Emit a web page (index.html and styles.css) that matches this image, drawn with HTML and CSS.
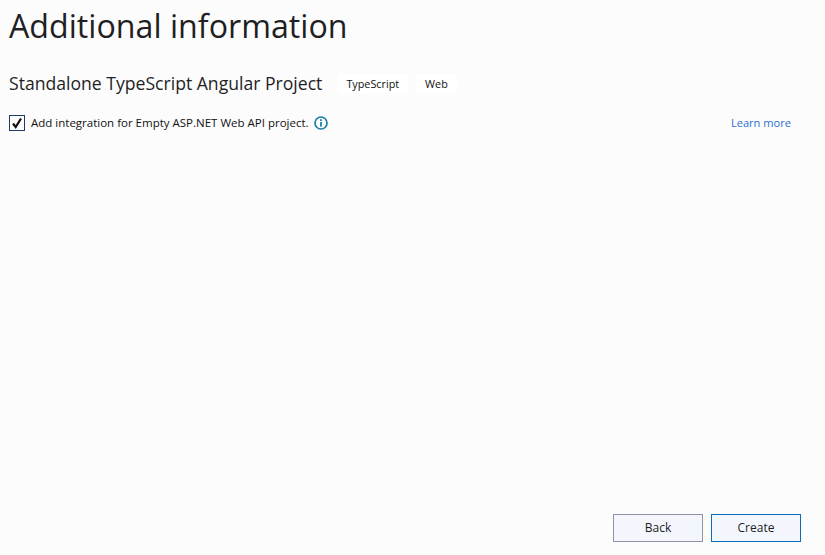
FILE: index.html
```html
<!DOCTYPE html>
<html lang="en">
<head>
<meta charset="utf-8">
<title>Additional information</title>
<link rel="stylesheet" href="styles.css">
</head>
<body>
<main class="page">
  <h1 class="title">Additional information</h1>
  <div class="subtitle-row">
    <h2 class="subtitle">Standalone TypeScript Angular Project</h2>
    <span class="tag">TypeScript</span>
    <span class="tag">Web</span>
  </div>
  <div class="option-row">
    <span class="checkbox">
      <svg width="12" height="12" viewBox="0 0 12 12"><path d="M2 6.5 L4.7 10 L10 1.5" fill="none" stroke="#111" stroke-width="2.2"/></svg>
    </span>
    <span class="option-label">Add integration for Empty ASP.NET Web API project.</span>
    <svg class="info" width="14" height="14" viewBox="0 0 14 14"><circle cx="7" cy="7" r="6" fill="#fff" stroke="#1a7fa8" stroke-width="1.7"/><rect x="6.1" y="6" width="1.8" height="4.6" fill="#1a7fa8"/><rect x="6.1" y="3.2" width="1.8" height="1.8" fill="#1a7fa8"/></svg>
    <a class="learn" href="#">Learn more</a>
  </div>
  <div class="footer">
    <button class="btn btn-back">Back</button>
    <button class="btn btn-create">Create</button>
  </div>
</main>
</body>
</html>
```
FILE: styles.css
```css
* { box-sizing: border-box; }
html, body { margin: 0; height: 100%; }
body { background: #fcfcfd; color: #1e1e1e; font-family: "Open Sans", "Noto Sans", sans-serif; overflow: hidden; }
.page { height: 555px; display: flex; flex-direction: column; padding: 0 24px 13px 9px; }
.title { margin: 5px 0 0; font-size: 32.2px; line-height: 42px; font-weight: 400; color: #1f1f24; }
.subtitle-row { display: flex; align-items: center; margin-top: 24px; height: 24px; }
.subtitle { margin: 0 15px 0 0; font-size: 17.6px; line-height: 24px; font-weight: 400; color: #1f1f24; }
.tag { background: #fff; border-radius: 4px; font-size: 10.8px; line-height: 19px; padding: 0 9px; margin-right: 8px; color: #111; }
.option-row { display: flex; align-items: center; margin-top: 18px; height: 20px; }
.checkbox { width: 16px; height: 16px; border: 1px solid #1b3a6b; background: #fff; display: flex; align-items: center; justify-content: center; margin-right: 6px; }
.option-label { font-size: 11.5px; line-height: 16px; color: #111; }
.info { margin-left: 5px; }
.learn { margin-left: auto; margin-right: 10px; margin-bottom: 2px; font-size: 11.1px; color: #2b6fd1; text-decoration: none; }
.footer { margin-top: auto; display: flex; justify-content: flex-end; gap: 8px; }
.btn { width: 90px; height: 28px; padding: 0 0 2px; background: #f3f6fd; font-family: inherit; font-size: 12px; color: #1e1e1e; border: 1px solid #8a93a8; border-radius: 0; }
.btn-create { border-color: #0a6cbd; }
```
